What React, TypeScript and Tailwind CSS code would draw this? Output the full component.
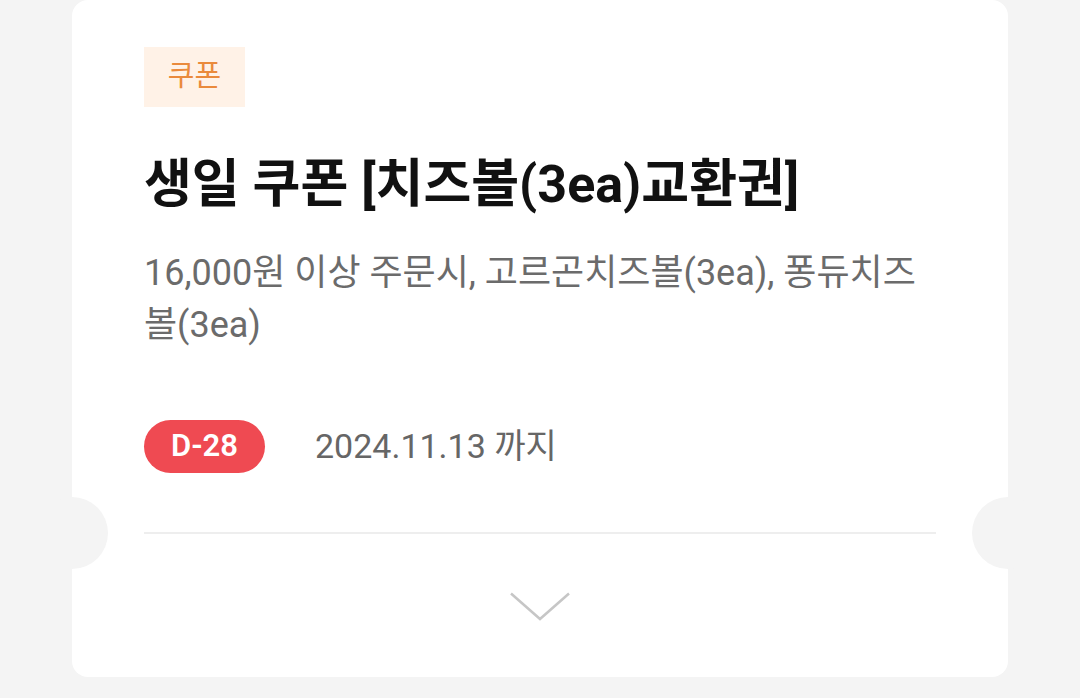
import React from 'react';

const font = { fontFamily: "Roboto, 'Noto Sans CJK KR', sans-serif" };

interface CouponProps {
  kind: string;
  title: string;
  description: string;
  dday: number;
  until: string;
}

const CouponCard: React.FC<CouponProps> = ({ kind, title, description, dday, until }) => {
  return (
    <div className="relative ml-[72px] w-[936px] h-[677px] rounded-2xl bg-white">
      {/* ticket notches */}
      <div className="absolute left-[-36px] top-[497px] h-[72px] w-[72px] rounded-full bg-[#f4f4f4]" />
      <div className="absolute right-[-36px] top-[497px] h-[72px] w-[72px] rounded-full bg-[#f4f4f4]" />

      <div className="flex flex-col px-[72px] pt-[47px]">
        <div className="flex h-[60px] w-[101px] items-center justify-center bg-[#fff2e7] text-[29px] text-[#ea8a3c]">
          {kind}
        </div>

        <h1 className="mt-[50px] text-[52px] leading-[56px] font-bold text-[#111]">{title}</h1>

        <p className="mt-[34px] w-full text-[36px] leading-[52px] text-[#6b6b6b]">{description}</p>

        <div className="mt-[69px] flex items-center">
          <span className="flex h-[53px] w-[121px] items-center justify-center rounded-full bg-[#ef4a52] text-[31px] font-semibold text-white">
            D-{dday}
          </span>
          <span className="ml-[50px] text-[34px] text-[#666]">{until} 까지</span>
        </div>

        <div className="mt-[59px] h-[2px] w-full bg-[#eeeeee]" />

        <div className="flex justify-center pt-[58px]">
          <svg width="60" height="30" viewBox="0 0 60 30" fill="none">
            <path d="M1 1.5L30 27L59 1.5" stroke="#c6c6c6" strokeWidth="2.5" />
          </svg>
        </div>
      </div>
    </div>
  );
};

export default function App() {
  return (
    <div className="h-[698px] w-[1080px] overflow-hidden bg-[#f4f4f4]" style={font}>
      <CouponCard
        kind="쿠폰"
        title="생일 쿠폰 [치즈볼(3ea)교환권]"
        description="16,000원 이상 주문시, 고르곤치즈볼(3ea), 퐁듀치즈볼(3ea)"
        dday={28}
        until="2024.11.13"
      />
    </div>
  );
}
